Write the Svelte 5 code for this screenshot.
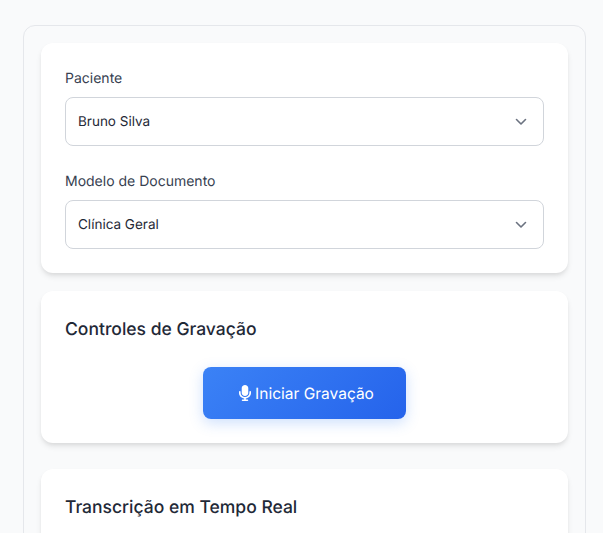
<script>
  const fields = [
    { label: "Paciente", value: "Bruno Silva", options: ["Bruno Silva", "Ana Souza"] },
    { label: "Modelo de Documento", value: "Clínica Geral", options: ["Clínica Geral", "Cardiologia"] },
  ];
</script>

<div class="page">
  <div class="panel">
    <section class="card first">
      {#each fields as field}
        <div class="field">
          <label for={field.label}>{field.label}</label>
          <div class="select">
            <select id={field.label} value={field.value}>
              {#each field.options as option}
                <option>{option}</option>
              {/each}
            </select>
            <svg class="chevron" viewBox="0 0 20 20" width="20" height="20" fill="none">
              <path d="M5.500 8.500l4.500 4.500 4.500-4.500" stroke="#6b7280" stroke-width="1.6" stroke-linecap="round" stroke-linejoin="round" />
            </svg>
          </div>
        </div>
      {/each}
    </section>

    <section class="card second">
      <h2>Controles de Gravação</h2>
      <div class="actions">
        <button type="button">
          <svg viewBox="16 0 352 512" width="12" height="16" preserveAspectRatio="none" fill="currentColor">
            <path d="M192 0c-53 0-96 43-96 96v160c0 53 43 96 96 96s96-43 96-96V96c0-53-43-96-96-96zM64 216c0-13.300-10.700-24-24-24s-24 10.700-24 24v40c0 89.100 66.200 162.700 152 174.400V464h-48c-13.300 0-24 10.700-24 24s10.700 24 24 24h144c13.300 0 24-10.700 24-24s-10.700-24-24-24h-48v-33.600c85.800-11.700 152-85.300 152-174.400v-40c0-13.300-10.700-24-24-24s-24 10.700-24 24v40c0 70.700-57.300 128-128 128S64 326.700 64 256v-40z" />
          </svg>
          <span>Iniciar Gravação</span>
        </button>
      </div>
    </section>

    <section class="card third">
      <h2>Transcrição em Tempo Real</h2>
    </section>
  </div>
</div>

<style>
  :global(body) {
    background: #f9fafb;
    font-family: Inter, "Liberation Sans", sans-serif;
    text-rendering: geometricPrecision;
  }

  .page {
    height: 533px;
    overflow: hidden;
    padding: 25px 17px 0 23px;
    box-sizing: border-box;
  }

  .panel {
    border: 1px solid #e5e7eb;
    border-radius: 12px;
    padding: 17px;
    height: 700px;
    background: #f9fafb;
  }

  .card {
    background: #fff;
    border-radius: 12px;
    padding: 24px;
    box-shadow: 0 4px 6px -1px rgba(0, 0, 0, 0.1), 0 2px 4px -1px rgba(0, 0, 0, 0.06);
  }

  .first {
    margin-bottom: 18px;
  }

  .second {
    margin-bottom: 26px;
  }

  .field + .field {
    margin-top: 24px;
  }

  label {
    display: block;
    margin-bottom: 7px;
    padding-top: 1px;
    font-size: 14px;
    line-height: 22px;
    font-weight: 400;
    color: #374151;
  }

  .select {
    position: relative;
  }

  select {
    display: block;
    width: 100%;
    height: 49px;
    padding: 0 12px;
    appearance: none;
    background: #fff;
    border: 1px solid #d1d5db;
    border-radius: 8px;
    font: inherit;
    font-size: 13.500px;
    color: #1f2937;
    text-rendering: geometricPrecision;
  }

  .chevron {
    position: absolute;
    top: 14px;
    right: 13px;
    pointer-events: none;
  }

  h2 {
    margin: 0 0 23px;
    padding-top: 1px;
    font-size: 17.500px;
    line-height: 28px;
    font-weight: 550;
    color: #1f2937;
  }

  .actions {
    display: flex;
    justify-content: center;
  }

  button {
    display: flex;
    align-items: center;
    justify-content: center;
    gap: 4px;
    width: 203px;
    height: 52px;
    border: 0;
    border-radius: 8px;
    background: linear-gradient(135deg, #3b82f6, #2563eb);
    color: #fff;
    font: inherit;
    font-size: 15.500px;
    font-weight: 400;
    text-rendering: geometricPrecision;
    box-shadow: 0 4px 14px rgba(59, 130, 246, 0.25);
  }

  button svg {
    margin-left: 4px;
    flex: none;
  }
</style>
